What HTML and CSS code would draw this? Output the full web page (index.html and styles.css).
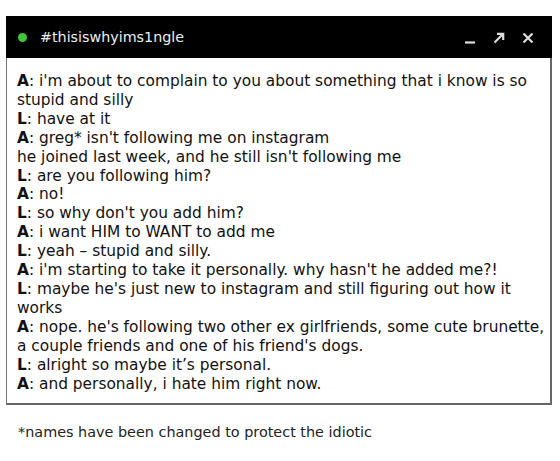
FILE: index.html
```html
<!DOCTYPE html>
<html>
<head>
<meta charset="utf-8">
<link rel="stylesheet" href="styles.css">
</head>
<body>
<div class="window">
  <div class="titlebar">
    <span class="dot"></span>
    <span class="title">#thisiswhyims1ngle</span>
    <div class="controls">
      <svg class="icon" width="12" height="12" viewBox="0 0 12 12"><path d="M1 10.5H11" stroke="#ddd" stroke-width="2.2" fill="none"/></svg>
      <svg class="icon" width="12" height="12" viewBox="0 0 12 12"><path d="M1.5 10.5L10 2M4 1.8H10.2V8" stroke="#ddd" stroke-width="2.2" fill="none"/></svg>
      <svg class="icon" width="12" height="12" viewBox="0 0 12 12"><path d="M1.5 1.5L10.5 10.5M10.5 1.5L1.5 10.5" stroke="#ddd" stroke-width="2.2" fill="none"/></svg>
    </div>
  </div>
  <div class="chat">
    <p><b>A</b>: i'm about to complain to you about something that i know is so<br>stupid and silly</p>
    <p><b>L</b>: have at it</p>
    <p><b>A</b>: greg* isn't following me on instagram</p>
    <p>he joined last week, and he still isn't following me</p>
    <p><b>L</b>: are you following him?</p>
    <p><b>A</b>: no!</p>
    <p><b>L</b>: so why don't you add him?</p>
    <p><b>A</b>: i want HIM to WANT to add me</p>
    <p><b>L</b>: yeah – stupid and silly.</p>
    <p><b>A</b>: i'm starting to take it personally. why hasn't he added me?!</p>
    <p><b>L</b>: maybe he's just new to instagram and still figuring out how it<br>works</p>
    <p><b>A</b>: nope. he's following two other ex girlfriends, some cute brunette,<br>a couple friends and one of his friend's dogs.</p>
    <p><b>L</b>: alright so maybe it’s personal.</p>
    <p><b>A</b>: and personally, i hate him right now.</p>
  </div>
</div>
<p class="note">*names have been changed to protect the idiotic</p>
</body>
</html>
```
FILE: styles.css
```css
body {
  margin: 0;
  background: #fff;
  font-family: "DejaVu Sans", "Liberation Sans", sans-serif;
  color: #111;
}
.window {
  margin: 16px 0 0 6px;
  width: 546px;
}
.titlebar {
  height: 42px;
  background: #000;
  display: flex;
  align-items: center;
  padding: 0 18px 0 12px;
  box-sizing: border-box;
}
.dot {
  width: 9px;
  height: 9px;
  border-radius: 50%;
  background: #3fc63a;
  margin-right: 13px;
  margin-top: 1px;
}
.title {
  color: #eee;
  font-size: 14.3px;
  flex: 1;
}
.controls {
  display: flex;
  gap: 17px;
  align-items: center;
  margin-top: 1px;
}
.icon {
  display: block;
}
.chat {
  border-left: 1px solid #777;
  border-right: 2px solid #666;
  border-bottom: 2px solid #666;
  padding: 14px 0 10px 10px;
  font-size: 15.4px;
  line-height: 18.9px;
}
.chat p {
  margin: 0;
  white-space: nowrap;
}
.chat b {
  font-weight: bold;
}
.note {
  margin: 19px 0 0 18px;
  font-size: 14.4px;
  color: #222;
}
```
